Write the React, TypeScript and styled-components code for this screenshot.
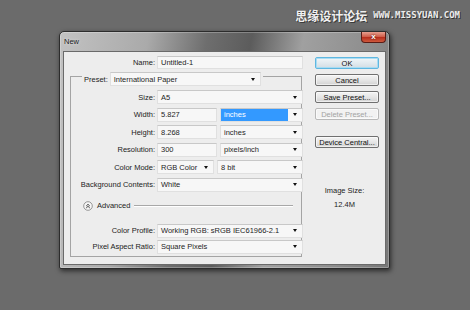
import React from 'react';
import styled, { createGlobalStyle } from 'styled-components';

const GlobalStyle = createGlobalStyle`
	html, body {
		margin: 0;
		padding: 0;
		background: #6b6b6b;
	}
	body {
		font-family: 'Liberation Sans', Arial, sans-serif;
	}
`;

const Page = styled.div`
	width: 470px;
	height: 310px;
	overflow: hidden;
	background: #6b6b6b;
`;

const Watermark = styled.div`
	height: 31px;
	box-sizing: border-box;
	display: flex;
	align-items: center;
	justify-content: flex-end;
	gap: 6px;
	padding: 0 10px 0 0;
`;

const WatermarkCn = styled.span`
	font-family: 'Noto Sans CJK SC', sans-serif;
	font-size: 12px;
	font-weight: 700;
	line-height: 1;
	color: #f0f0f0;
	text-shadow: 1px 1px 0 #3a3a3a, -1px 0 0 #555;
`;

const WatermarkUrl = styled.span`
	font-family: 'DejaVu Sans Mono', monospace;
	font-size: 9px;
	font-weight: 700;
	line-height: 1;
	color: #ececec;
	text-shadow: 1px 1px 0 #333;
`;

const Window = styled.div`
	margin-left: 59px;
	width: 331px;
	height: 238px;
	box-sizing: border-box;
	display: flex;
	flex-direction: column;
	padding: 0 3px 3px;
	border: 1px solid #2c2c2c;
	border-radius: 5px 5px 2px 2px;
	background: linear-gradient(
		100deg,
		#c2c2c2 0%,
		#aaaaaa 24%,
		#6e6e6e 40%,
		#5c5c5c 52%,
		#a0a0a0 66%,
		#8e8e8e 84%,
		#777 100%
	);
	box-shadow: 1px 2px 5px rgba(0, 0, 0, 0.6), inset 0 0 0 1px rgba(255, 255, 255, 0.25);
`;

const TitleBar = styled.div`
	height: 19px;
	display: flex;
	justify-content: space-between;
	align-items: flex-start;
`;

const Title = styled.span`
	align-self: center;
	padding-left: 1px;
	font-size: 7.5px;
	color: #1a1a1a;
	text-shadow: 0 0 3px rgba(255, 255, 255, 0.7);
`;

const CloseButton = styled.div`
	width: 25px;
	height: 11px;
	box-sizing: border-box;
	display: flex;
	align-items: center;
	justify-content: center;
	border: 1px solid #5a1c16;
	border-top: none;
	border-radius: 0 0 4px 4px;
	background: linear-gradient(to bottom, #e7a090 0%, #d1604c 45%, #b8301e 55%, #cf5a3e 100%);
	color: #fff;
	font-size: 8px;
	font-weight: 700;
	line-height: 1;
	text-shadow: 0 0 2px #400;
`;

const Client = styled.div`
	flex: 1;
	display: flex;
	background: #ededed;
	border: 1px solid #6a6a6a;
`;

const FormColumn = styled.div`
	width: 240px;
	box-sizing: border-box;
	padding: 4px 0 0 6px;
`;

const NameRow = styled.div`
	height: 13px;
	display: grid;
	grid-template-columns: 85px 146px;
	column-gap: 2px;
`;

const Label = styled.span`
	display: flex;
	align-items: center;
	justify-content: flex-end;
	font-size: 7.5px;
	color: #1c1c1c;
	white-space: nowrap;
`;

const Field = styled.div<{ $width?: number }>`
	${(p) => (p.$width ? `width: ${p.$width}px; flex: none;` : 'flex: 1;')}
	height: 100%;
	min-width: 0;
	box-sizing: border-box;
	display: flex;
	align-items: stretch;
	background: #f7f7f7;
	border: 1px solid #e0e0e0;
	border-top-color: #c8c8c8;
	font-size: 7.5px;
	color: #1e1e1e;
`;

const Value = styled.span<{ $selected?: boolean }>`
	flex: 1;
	display: flex;
	align-items: center;
	padding-left: 3px;
	white-space: nowrap;
	background: ${(p) => (p.$selected ? '#3399ff' : 'transparent')};
	color: ${(p) => (p.$selected ? '#fff' : 'inherit')};
`;

const ArrowZone = styled.span`
	width: 14px;
	display: flex;
	align-items: center;
	justify-content: center;
	&::after {
		content: '';
		border-left: 2.5px solid transparent;
		border-right: 2.5px solid transparent;
		border-top: 3px solid #111;
	}
`;

const Group = styled.fieldset`
	width: 232px;
	box-sizing: border-box;
	margin: -2px 0 0;
	padding: 0 0 2px;
	min-width: 0;
	border: 1px solid #a4a4a4;
`;

const Legend = styled.legend`
	margin-left: 11px;
	padding: 5px 2px 0;
	height: 19px;
	box-sizing: border-box;
	display: flex;
	gap: 2px;
`;

const LegendField = styled.div`
	width: 151px;
	height: 14px;
	display: flex;
`;

const Rows = styled.div<{ $gap: number; $top: number }>`
	display: grid;
	grid-template-columns: 84px 146px;
	grid-auto-rows: 14px;
	column-gap: 2px;
	row-gap: ${(p) => p.$gap}px;
	padding-top: ${(p) => p.$top}px;
`;

const Pair = styled.div<{ $gap?: number }>`
	display: flex;
	gap: ${(p) => p.$gap ?? 3}px;
`;

const Advanced = styled.div`
	height: 14px;
	margin-top: 7px;
	display: flex;
	align-items: center;
	padding: 0 8px 0 12px;
	font-size: 7.5px;
	color: #1c1c1c;
`;

const AdvancedText = styled.span`
	margin: 0 4px 0 4px;
`;

const Rule = styled.span`
	flex: 1;
	border-top: 1px solid #a8a8a8;
	border-bottom: 1px solid #fff;
`;

const ButtonColumn = styled.div`
	width: 64px;
	margin-left: 11px;
	padding-top: 5px;
	display: flex;
	flex-direction: column;
	gap: 5px;
`;

const Button = styled.div<{ $default?: boolean; $disabled?: boolean; $space?: number }>`
	height: 12px;
	box-sizing: border-box;
	display: flex;
	align-items: center;
	justify-content: center;
	margin-top: ${(p) => p.$space ?? 0}px;
	border: 1px solid ${(p) => (p.$default ? '#5fb7e0' : p.$disabled ? '#b9b9b9' : '#707070')};
	border-radius: 2px;
	background: ${(p) =>
		p.$disabled
			? '#f2f2f2'
			: p.$default
			? 'linear-gradient(to bottom, #f2f6f8 0%, #e2eaef 50%, #d4dde3 100%)'
			: 'linear-gradient(to bottom, #f4f4f4 0%, #e6e6e6 50%, #d2d2d2 100%)'};
	box-shadow: ${(p) => (p.$default ? 'inset 0 0 0 1px #a9dcf3' : 'inset 0 0 0 1px rgba(255,255,255,0.6)')};
	font-size: 7.5px;
	color: ${(p) => (p.$disabled ? '#a3a3a3' : '#111')};
	white-space: nowrap;
`;

const ImageSize = styled.div`
	margin-top: 31px;
	margin-right: 5px;
	text-align: center;
	font-size: 7.5px;
	line-height: 14px;
	color: #1c1c1c;
`;

const Dropdown: React.FC<{ value: string; width?: number; selected?: boolean }> = ({ value, width, selected }) => (
	<Field $width={width}>
		<Value $selected={selected}>{value}</Value>
		<ArrowZone />
	</Field>
);

const Input: React.FC<{ value: string; width?: number }> = ({ value, width }) => (
	<Field $width={width}>
		<Value>{value}</Value>
	</Field>
);

const AdvancedIcon = () => (
	<svg width="10" height="10" viewBox="0 0 10 10">
		<circle cx="5" cy="5" r="4.3" fill="#f6f6f6" stroke="#7d7d7d" strokeWidth="0.8" />
		<path d="M3.2 5 L5 3.3 L6.8 5 M3.2 7 L5 5.3 L6.8 7" fill="none" stroke="#333" strokeWidth="0.9" />
	</svg>
);

export default function App() {
	return (
		<Page>
			<GlobalStyle />
			<Watermark>
				<WatermarkCn>思缘设计论坛</WatermarkCn>
				<WatermarkUrl>WWW.MISSYUAN.COM</WatermarkUrl>
			</Watermark>
			<Window>
				<TitleBar>
					<Title>New</Title>
					<CloseButton>x</CloseButton>
				</TitleBar>
				<Client>
					<FormColumn>
						<NameRow>
							<Label>Name:</Label>
							<Input value="Untitled-1" />
						</NameRow>
						<Group>
							<Legend>
								<Label>Preset:</Label>
								<LegendField>
									<Dropdown value="International Paper" />
								</LegendField>
							</Legend>
							<Rows $gap={3.6} $top={4}>
								<Label>Size:</Label>
								<Dropdown value="A5" />
								<Label>Width:</Label>
								<Pair>
									<Input value="5.827" width={60} />
									<Dropdown value="inches" selected />
								</Pair>
								<Label>Height:</Label>
								<Pair>
									<Input value="8.268" width={60} />
									<Dropdown value="inches" />
								</Pair>
								<Label>Resolution:</Label>
								<Pair>
									<Input value="300" width={60} />
									<Dropdown value="pixels/inch" />
								</Pair>
								<Label>Color Mode:</Label>
								<Pair>
									<Dropdown value="RGB Color" width={57} />
									<Dropdown value="8 bit" />
								</Pair>
								<Label>Background Contents:</Label>
								<Dropdown value="White" />
							</Rows>
							<Advanced>
								<AdvancedIcon />
								<AdvancedText>Advanced</AdvancedText>
								<Rule />
							</Advanced>
							<Rows $gap={2} $top={11}>
								<Label>Color Profile:</Label>
								<Dropdown value="Working RGB:  sRGB IEC61966-2.1" />
								<Label>Pixel Aspect Ratio:</Label>
								<Dropdown value="Square Pixels" />
							</Rows>
						</Group>
					</FormColumn>
					<ButtonColumn>
						<Button $default>OK</Button>
						<Button>Cancel</Button>
						<Button>Save Preset...</Button>
						<Button $disabled>Delete Preset...</Button>
						<Button $space={11}>Device Central...</Button>
						<ImageSize>
							Image Size:
							<br />
							12.4M
						</ImageSize>
					</ButtonColumn>
				</Client>
			</Window>
		</Page>
	);
}
